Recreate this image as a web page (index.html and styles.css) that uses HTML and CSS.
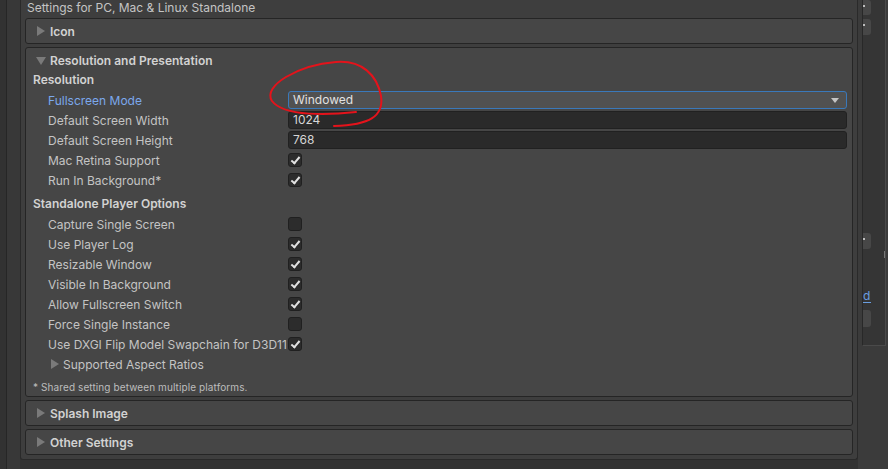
FILE: index.html
```html
<!DOCTYPE html>
<html>
<head>
    <meta name="viewport" content="width=device-width, initial-scale=1.0">
    <link rel="stylesheet" href="styles.css">
</head>
<body>
    <div class="gutter"><div class="gutter-strip"></div></div>

    <div class="inspector">
        <div class="title">Settings for PC, Mac &amp; Linux Standalone</div>

        <div class="foldout">
            <div class="foldout-head"><span class="tri right"></span>Icon</div>
        </div>

        <div class="foldout open">
            <div class="foldout-head"><span class="tri down"></span>Resolution and Presentation</div>

            <div class="group-label">Resolution</div>
            <div class="row">
                <span class="label focus">Fullscreen Mode</span>
                <div class="dropdown">Windowed<span class="dd-arrow"></span></div>
            </div>
            <div class="row">
                <span class="label">Default Screen Width</span>
                <div class="field">1024</div>
            </div>
            <div class="row">
                <span class="label">Default Screen Height</span>
                <div class="field">768</div>
            </div>
            <div class="row">
                <span class="label">Mac Retina Support</span>
                <span class="check on"></span>
            </div>
            <div class="row">
                <span class="label">Run In Background*</span>
                <span class="check on"></span>
            </div>

            <div class="group-label spaced">Standalone Player Options</div>
            <div class="row"><span class="label">Capture Single Screen</span><span class="check"></span></div>
            <div class="row"><span class="label">Use Player Log</span><span class="check on"></span></div>
            <div class="row"><span class="label">Resizable Window</span><span class="check on"></span></div>
            <div class="row"><span class="label">Visible In Background</span><span class="check on"></span></div>
            <div class="row"><span class="label">Allow Fullscreen Switch</span><span class="check on"></span></div>
            <div class="row"><span class="label">Force Single Instance</span><span class="check"></span></div>
            <div class="row"><span class="label">Use DXGI Flip Model Swapchain for D3D11</span><span class="check on"></span></div>
            <div class="row sub"><span class="tri right"></span>Supported Aspect Ratios</div>

            <div class="note">* Shared setting between multiple platforms.</div>
        </div>

        <div class="foldout">
            <div class="foldout-head"><span class="tri right"></span>Splash Image</div>
        </div>
        <div class="foldout">
            <div class="foldout-head"><span class="tri right"></span>Other Settings</div>
        </div>
    </div>

    <div class="side">
        <div class="side-panel">
            <div class="mini-btn first"></div>
            <div class="mini-btn"></div>
            <div class="mini-btn mid"></div>
            <div class="side-link">d</div>
            <div class="mini-btn plain"></div>
            <span class="side-thumb"></span>
        </div>
    </div>

    <!-- hand-drawn red circle around the dropdown -->
    <svg class="scribble" width="888" height="469" viewBox="0 0 888 469">
        <path d="M356,112 C330,115 284,117 272,101 C262,86 298,65 336,62 C362,60 377,75 381,96 C384,116 370,125 334,126"
              fill="none" stroke="#e4131b" stroke-width="2" stroke-linecap="round"/>
    </svg>
</body>
</html>
```

FILE: styles.css
```css
* {margin: 0; padding: 0; box-sizing: border-box;}
body {
    width: 888px;
    height: 469px;
    display: flex;
    background: #323232;
    font-family: Inter, "Noto Sans", sans-serif;
    font-size: 12px;
    color: #c4c4c4;
    overflow: hidden;
    position: relative;
}

.gutter {
    width: 20px;
    display: flex;
    background: #383838;
}

.gutter-strip {
    width: 7px;
    background: #323232;
    border-right: 1px solid #262626;
}

.inspector {
    width: 838px;
    height: 460px;
    background: #3e3e3e;
    border: 1px solid #2a2a2a;
    border-top: none;
    border-radius: 0 0 3px 3px;
    padding: 0 4px;
}

.title {
    height: 17px;
    line-height: 16px;
    padding-left: 2px;
    margin-bottom: 1px;
    color: #c4c4c4;
}

.foldout {
    background: #464646;
    border: 1px solid #252525;
    border-radius: 3px;
    margin-bottom: 3px;
}

.foldout-head {
    height: 24px;
    display: flex;
    align-items: center;
    padding-left: 10px;
    font-weight: 600;
    color: #d2d2d2;
}

.foldout.open .foldout-head {
    height: 19px;
    margin-top: 3px;
}

.tri {
    width: 0;
    height: 0;
    margin-right: 5px;
}
.tri.right {
    border-top: 5px solid transparent;
    border-bottom: 5px solid transparent;
    border-left: 8px solid #7a7a7a;
    margin-left: 1px;
}
.tri.down {
    border-left: 5px solid transparent;
    border-right: 5px solid transparent;
    border-top: 8px solid #7a7a7a;
    margin-right: 4px;
}

.group-label {
    height: 20px;
    line-height: 20px;
    padding-left: 7px;
    font-weight: 600;
    color: #d2d2d2;
}
.group-label.spaced { margin-top: 4px; }

.row {
    height: 20px;
    display: flex;
    align-items: center;
    padding-left: 22px;
    padding-right: 5px;
}

.label {
    width: 240px;
    flex-shrink: 0;
    white-space: nowrap;
}
.label.focus { color: #7ba8ec; }

.row.sub { padding-left: 24px; }
.row.sub .tri { margin-right: 4px; }

.dropdown, .field {
    flex: 1;
    height: 18px;
    line-height: 16px;
    border-radius: 3px;
    padding-left: 4px;
    color: #d6d6d6;
}

.dropdown {
    background: #515151;
    border: 1px solid #3a79bb;
    position: relative;
    color: #e2e2e2;
}

.dd-arrow {
    position: absolute;
    right: 7px;
    top: 6px;
    border-left: 4px solid transparent;
    border-right: 4px solid transparent;
    border-top: 5px solid #c4c4c4;
}

.field {
    background: #2a2a2a;
    border: 1px solid #212121;
}

.check {
    width: 14px;
    height: 14px;
    background: #2c2c2c;
    border: 1px solid #202020;
    border-radius: 3px;
    position: relative;
}
.check.on::after {
    content: '';
    position: absolute;
    left: 4px;
    top: 1px;
    width: 3px;
    height: 7px;
    border: solid #e2e2e2;
    border-width: 0 2px 2px 0;
    transform: rotate(40deg);
}

.note {
    height: 18px;
    line-height: 18px;
    margin-top: 4px;
    padding-left: 7px;
    font-size: 10px;
    letter-spacing: 0.1px;
    color: #bdbdbd;
}

.side {
    width: 30px;
    display: flex;
    background: #3b3b3b;
    padding-left: 4px;
}

.side-panel {
    width: 24px;
    height: 346px;
    background: #353535;
    border-left: 1px solid #282828;
    border-right: 1px solid #4a4a4a;
    border-bottom: 1px solid #4a4a4a;
    position: relative;
}

.mini-btn {
    width: 8px;
    height: 16px;
    background: #474747;
    border-radius: 0 3px 3px 0;
    margin-top: 4px;
    position: relative;
}
.mini-btn.first { margin-top: 0; height: 15px; }
.mini-btn.mid { margin-top: 198px; }
.mini-btn.plain { margin-top: 7px; height: 17px; }
.mini-btn::after {
    content: '';
    position: absolute;
    left: 0;
    top: 5px;
    width: 2px;
    height: 2px;
    background: #bdbdbd;
}
.mini-btn.plain::after { display: none; }

.side-link {
    margin-top: 41px;
    width: 8px;
    font-size: 12px;
    line-height: 12px;
    color: #6a9ee0;
    border-bottom: 1px solid #6a9ee0;
}

.side-thumb {
    position: absolute;
    right: 0;
    top: 251px;
    width: 1px;
    height: 7px;
    background: #777;
}

.scribble {
    position: absolute;
    left: 0;
    top: 0;
    pointer-events: none;
}
```
